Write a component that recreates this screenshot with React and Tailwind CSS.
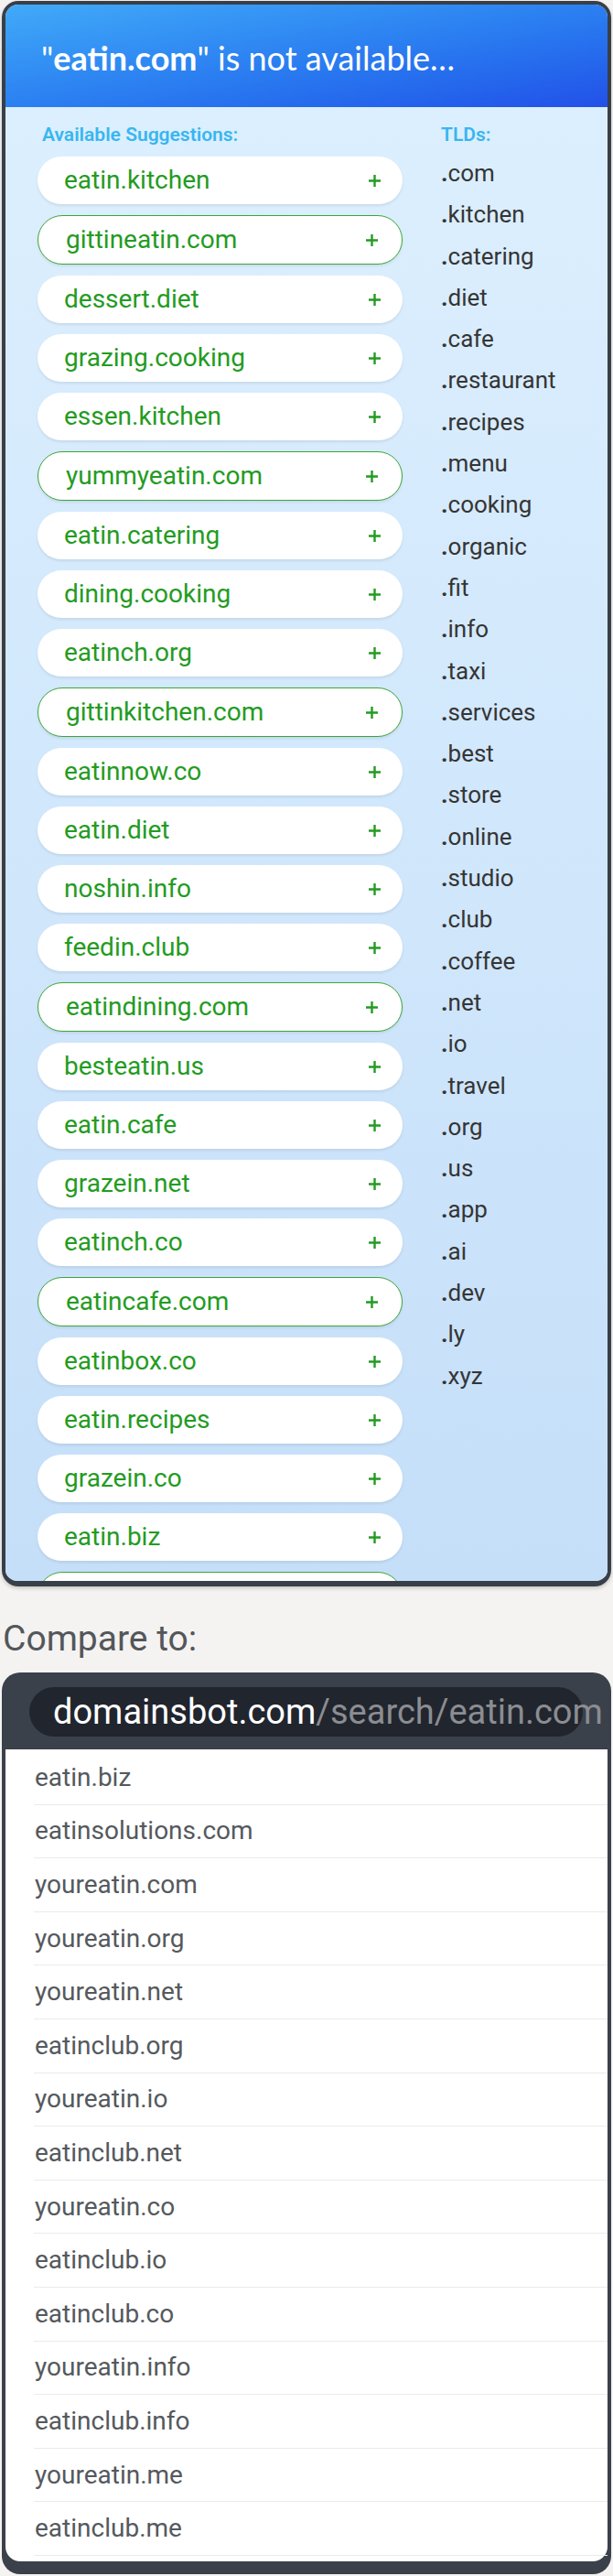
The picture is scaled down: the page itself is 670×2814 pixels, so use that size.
import React from 'react';

const suggestions = [
  ['eatin.kitchen'],
  ['gittineatin.com', true],
  ['dessert.diet'],
  ['grazing.cooking'],
  ['essen.kitchen'],
  ['yummyeatin.com', true],
  ['eatin.catering'],
  ['dining.cooking'],
  ['eatinch.org'],
  ['gittinkitchen.com', true],
  ['eatinnow.co'],
  ['eatin.diet'],
  ['noshin.info'],
  ['feedin.club'],
  ['eatindining.com', true],
  ['besteatin.us'],
  ['eatin.cafe'],
  ['grazein.net'],
  ['eatinch.co'],
  ['eatincafe.com', true],
  ['eatinbox.co'],
  ['eatin.recipes'],
  ['grazein.co'],
  ['eatin.biz'],
  ['', true],
];

const tlds = [
  'com', 'kitchen', 'catering', 'diet', 'cafe', 'restaurant', 'recipes', 'menu',
  'cooking', 'organic', 'fit', 'info', 'taxi', 'services', 'best', 'store', 'online',
  'studio', 'club', 'coffee', 'net', 'io', 'travel', 'org', 'us', 'app', 'ai', 'dev',
  'ly', 'xyz',
];

const compared = [
  'eatin.biz', 'eatinsolutions.com', 'youreatin.com', 'youreatin.org', 'youreatin.net',
  'eatinclub.org', 'youreatin.io', 'eatinclub.net', 'youreatin.co', 'eatinclub.io',
  'eatinclub.co', 'youreatin.info', 'eatinclub.info', 'youreatin.me', 'eatinclub.me',
];

function Plus() {
  return (
    <svg width="15" height="15" viewBox="0 0 15 15" fill="none">
      <path d="M7.5 1v13M1 7.5h13" stroke="currentColor" strokeWidth="2.4" />
    </svg>
  );
}

function Suggestion({ name, outlined }) {
  if (outlined) {
    return (
      <div className="flex h-[54px] items-center justify-between rounded-full border-[1.5px] border-[#3da53a] bg-white pl-[30px] pr-[25px] text-[#239b22] shadow-[0_2px_3px_rgba(0,0,0,0.07)]">
        <span className="text-[28px]">{name}</span>
        <Plus />
      </div>
    );
  }
  return (
    <div className="flex h-[52px] items-center justify-between rounded-full bg-white pl-[29px] pr-[23px] text-[#239b22] shadow-[0_2px_3px_rgba(0,0,0,0.08)]">
      <span className="text-[28px]">{name}</span>
      <Plus />
    </div>
  );
}

export default function App() {
  return (
    <div className="min-h-screen bg-[#f5f3f1] pt-px font-['Roboto',sans-serif]">
      {/* availability card */}
      <div className="mx-[2px] overflow-hidden rounded-[18px] border-4 border-b-[6px] border-[#393f48] shadow-[0_2px_4px_rgba(0,0,0,0.2)]">
        <div className="flex h-[112px] items-center whitespace-nowrap bg-linear-to-br from-[#42aaf8] to-[#2350e8] pl-[39px] pt-[3px] font-['Lato',sans-serif] text-[36px] text-white">
          <span>
            "<span className="font-bold">eatin.com</span>" is not available…
          </span>
        </div>

        <div className="flex h-[1610px] overflow-hidden bg-linear-to-b from-[#dceffe] to-[#c5dff9] pl-[35px] pt-[19px]">
          <div className="w-[399px] shrink-0">
            <h3 className="ml-[5px] text-[21px] font-semibold leading-[23px] text-[#38b6f1]">
              Available Suggestions:
            </h3>
            <div className="mt-3 flex flex-col gap-3">
              {suggestions.map(([name, outlined], i) => (
                <Suggestion key={i} name={name} outlined={outlined} />
              ))}
            </div>
          </div>

          <div className="ml-[42px]">
            <h3 className="text-[21px] font-semibold leading-[23px] text-[#38b6f1]">TLDs:</h3>
            <ul className="mt-2">
              {tlds.map((t) => (
                <li key={t} className="text-[26px] leading-[45.3px] text-[#353535]">
                  <span className="font-bold">.</span>
                  {t}
                </li>
              ))}
            </ul>
          </div>
        </div>
      </div>

      <p className="mt-[34px] pl-[3px] text-[39px] leading-[46px] text-[#53575b]">Compare to:</p>

      {/* domainsbot card */}
      <div className="mx-[2px] mt-[14px] overflow-hidden rounded-[20px] bg-[#3a414b] px-1 pb-[14px]">
        <div className="pb-[14px] pt-[16px]">
          <div className="ml-[26px] flex h-[54px] w-[605px] items-center whitespace-nowrap rounded-full bg-[#21252e] pl-[26px] text-[38px]">
            <span className="text-white">domainsbot.com</span>
            <span className="text-[#8b8d91]">/search/eatin.com</span>
          </div>
        </div>
        <div className="rounded-b-[16px] bg-white pb-[6px] pl-[31px] pt-[2px]">
          {compared.map((d) => (
            <div
              key={d}
              className="flex h-[58.6px] items-center border-b border-[#ebebeb] pl-px text-[28px] text-[#55595d]"
            >
              {d}
            </div>
          ))}
        </div>
      </div>
    </div>
  );
}
